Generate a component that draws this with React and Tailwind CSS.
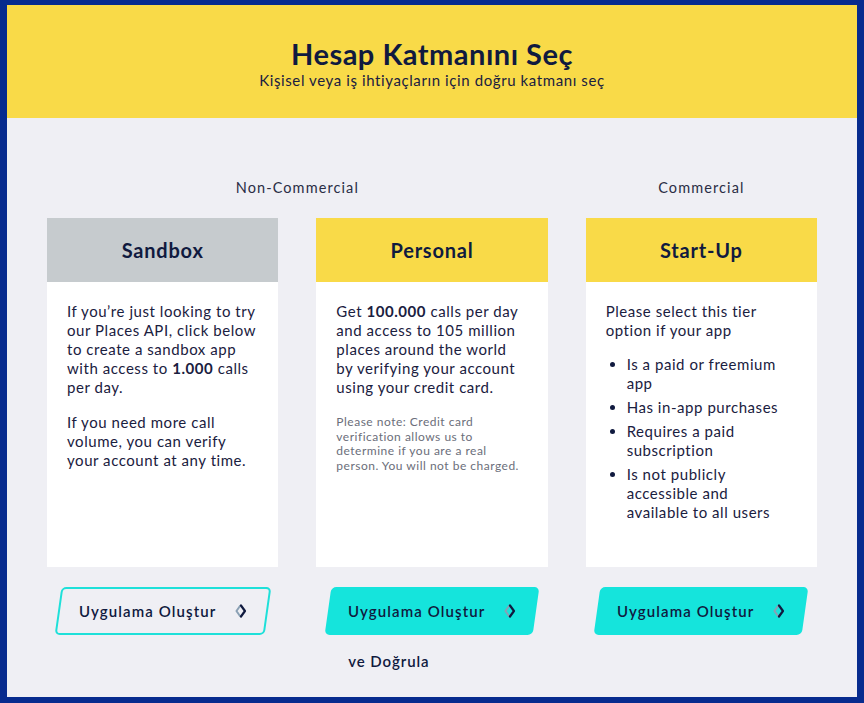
import React from 'react';

const font = { fontFamily: 'Lato, "Open Sans", sans-serif' };

function Chevron() {
  return (
    <svg width="12" height="16" viewBox="0 0 12 16" fill="none" className="shrink-0">
      <path d="M5 3 L1.5 8 L5 13" stroke="#8aa0b4" strokeWidth="2" strokeLinecap="round" strokeLinejoin="round" />
      <path d="M6 2.5 L10 8 L6 13.5" stroke="#101a3f" strokeWidth="2.2" strokeLinecap="round" strokeLinejoin="round" />
    </svg>
  );
}

function CreateButton({ outlined }) {
  return (
    <div className="flex justify-center">
      <div
        className={
          outlined
            ? 'w-[210px] h-[48px] -skew-x-[8deg] rounded-[5px] border-2 border-[#1ee0d9] bg-transparent flex items-center justify-center'
            : 'w-[208px] h-[48px] -skew-x-[8deg] rounded-[5px] bg-[#15e4dc] flex items-center justify-center'
        }
      >
        <div className="skew-x-[8deg] flex items-center gap-[19px] text-[15px] font-semibold text-[#101a3f] tracking-[1.1px]">
          <span>Uygulama Oluştur</span>
          <Chevron />
        </div>
      </div>
    </div>
  );
}

function Card({ title, headerBg, bodyPad, children }) {
  return (
    <div className="flex flex-col h-[349px]">
      <div className={`h-[64px] flex items-center justify-center ${headerBg}`}>
        <h2 className="text-[20px] font-bold text-[#101a3f] tracking-[0.8px]">{title}</h2>
      </div>
      <div className={`flex-1 bg-white pl-5 pt-[20px] text-[15px] leading-[19px] tracking-[0.55px] text-[#1a2040] ${bodyPad}`}>
        {children}
      </div>
    </div>
  );
}

export default function App() {
  return (
    <div className="w-[864px] h-[703px] bg-[#072b8e] pl-[7px] pr-[7px] pt-[5px] pb-[6px]" style={font}>
      <div className="h-full bg-[#efeff4] flex flex-col">
        <header className="h-[113px] bg-[#f9da48] flex flex-col items-center justify-center pt-[4px]">
          <h1 className="text-[29px] font-bold text-[#101a3f] leading-[32px] tracking-[0.5px]">Hesap Katmanını Seç</h1>
          <p className="text-[15px] text-[#1a2040] leading-[20px] tracking-[0.6px]">
            Kişisel veya iş ihtiyaçların için doğru katmanı seç
          </p>
        </header>

        <main className="px-10 pt-[60px]">
          <div className="grid grid-cols-3 gap-x-[38px]">
            <div className="col-span-2 text-center text-[14.5px] leading-[20px] tracking-[1.1px] text-[#2a2d45]">
              Non-Commercial
            </div>
            <div className="text-center text-[14.5px] leading-[20px] tracking-[1.1px] text-[#2a2d45]">Commercial</div>
          </div>

          <div className="grid grid-cols-3 gap-x-[38px] mt-[20px]">
            <Card title="Sandbox" headerBg="bg-[#c6cbce]" bodyPad="pr-[19px]">
              <p>
                If you’re just looking to try our Places API, click below to create a sandbox app with access to{' '}
                <b>1.000</b> calls per day.
              </p>
              <p className="mt-4">If you need more call volume, you can verify your account at any time.</p>
            </Card>
            <Card title="Personal" headerBg="bg-[#f9da48]" bodyPad="pr-6">
              <p>
                Get <b>100.000</b> calls per day and access to 105 million places around the world by verifying your
                account using your credit card.
              </p>
              <p className="mt-[18px] text-[12px] leading-[14.5px] tracking-[0.5px] text-[#6b6e7a]">
                Please note: Credit card verification allows us to determine if you are a real person. You will not be
                charged.
              </p>
            </Card>
            <Card title="Start-Up" headerBg="bg-[#f9da48]" bodyPad="pr-6">
              <p>Please select this tier option if your app</p>
              <ul className="mt-[15px] list-disc pl-[21px] space-y-[5px] marker:text-[#101a3f]">
                <li>Is a paid or freemium app</li>
                <li>Has in-app purchases</li>
                <li>Requires a paid subscription</li>
                <li>Is not publicly accessible and available to all users</li>
              </ul>
            </Card>
          </div>

          <div className="grid grid-cols-3 gap-x-[38px] mt-[20px]">
            <CreateButton outlined />
            <div className="flex flex-col">
              <CreateButton />
              <div className="mt-[16px] pl-[32px] text-[15px] font-semibold text-[#101a3f] leading-[20px] tracking-[0.9px]">
                ve Doğrula
              </div>
            </div>
            <CreateButton />
          </div>
        </main>
      </div>
    </div>
  );
}
